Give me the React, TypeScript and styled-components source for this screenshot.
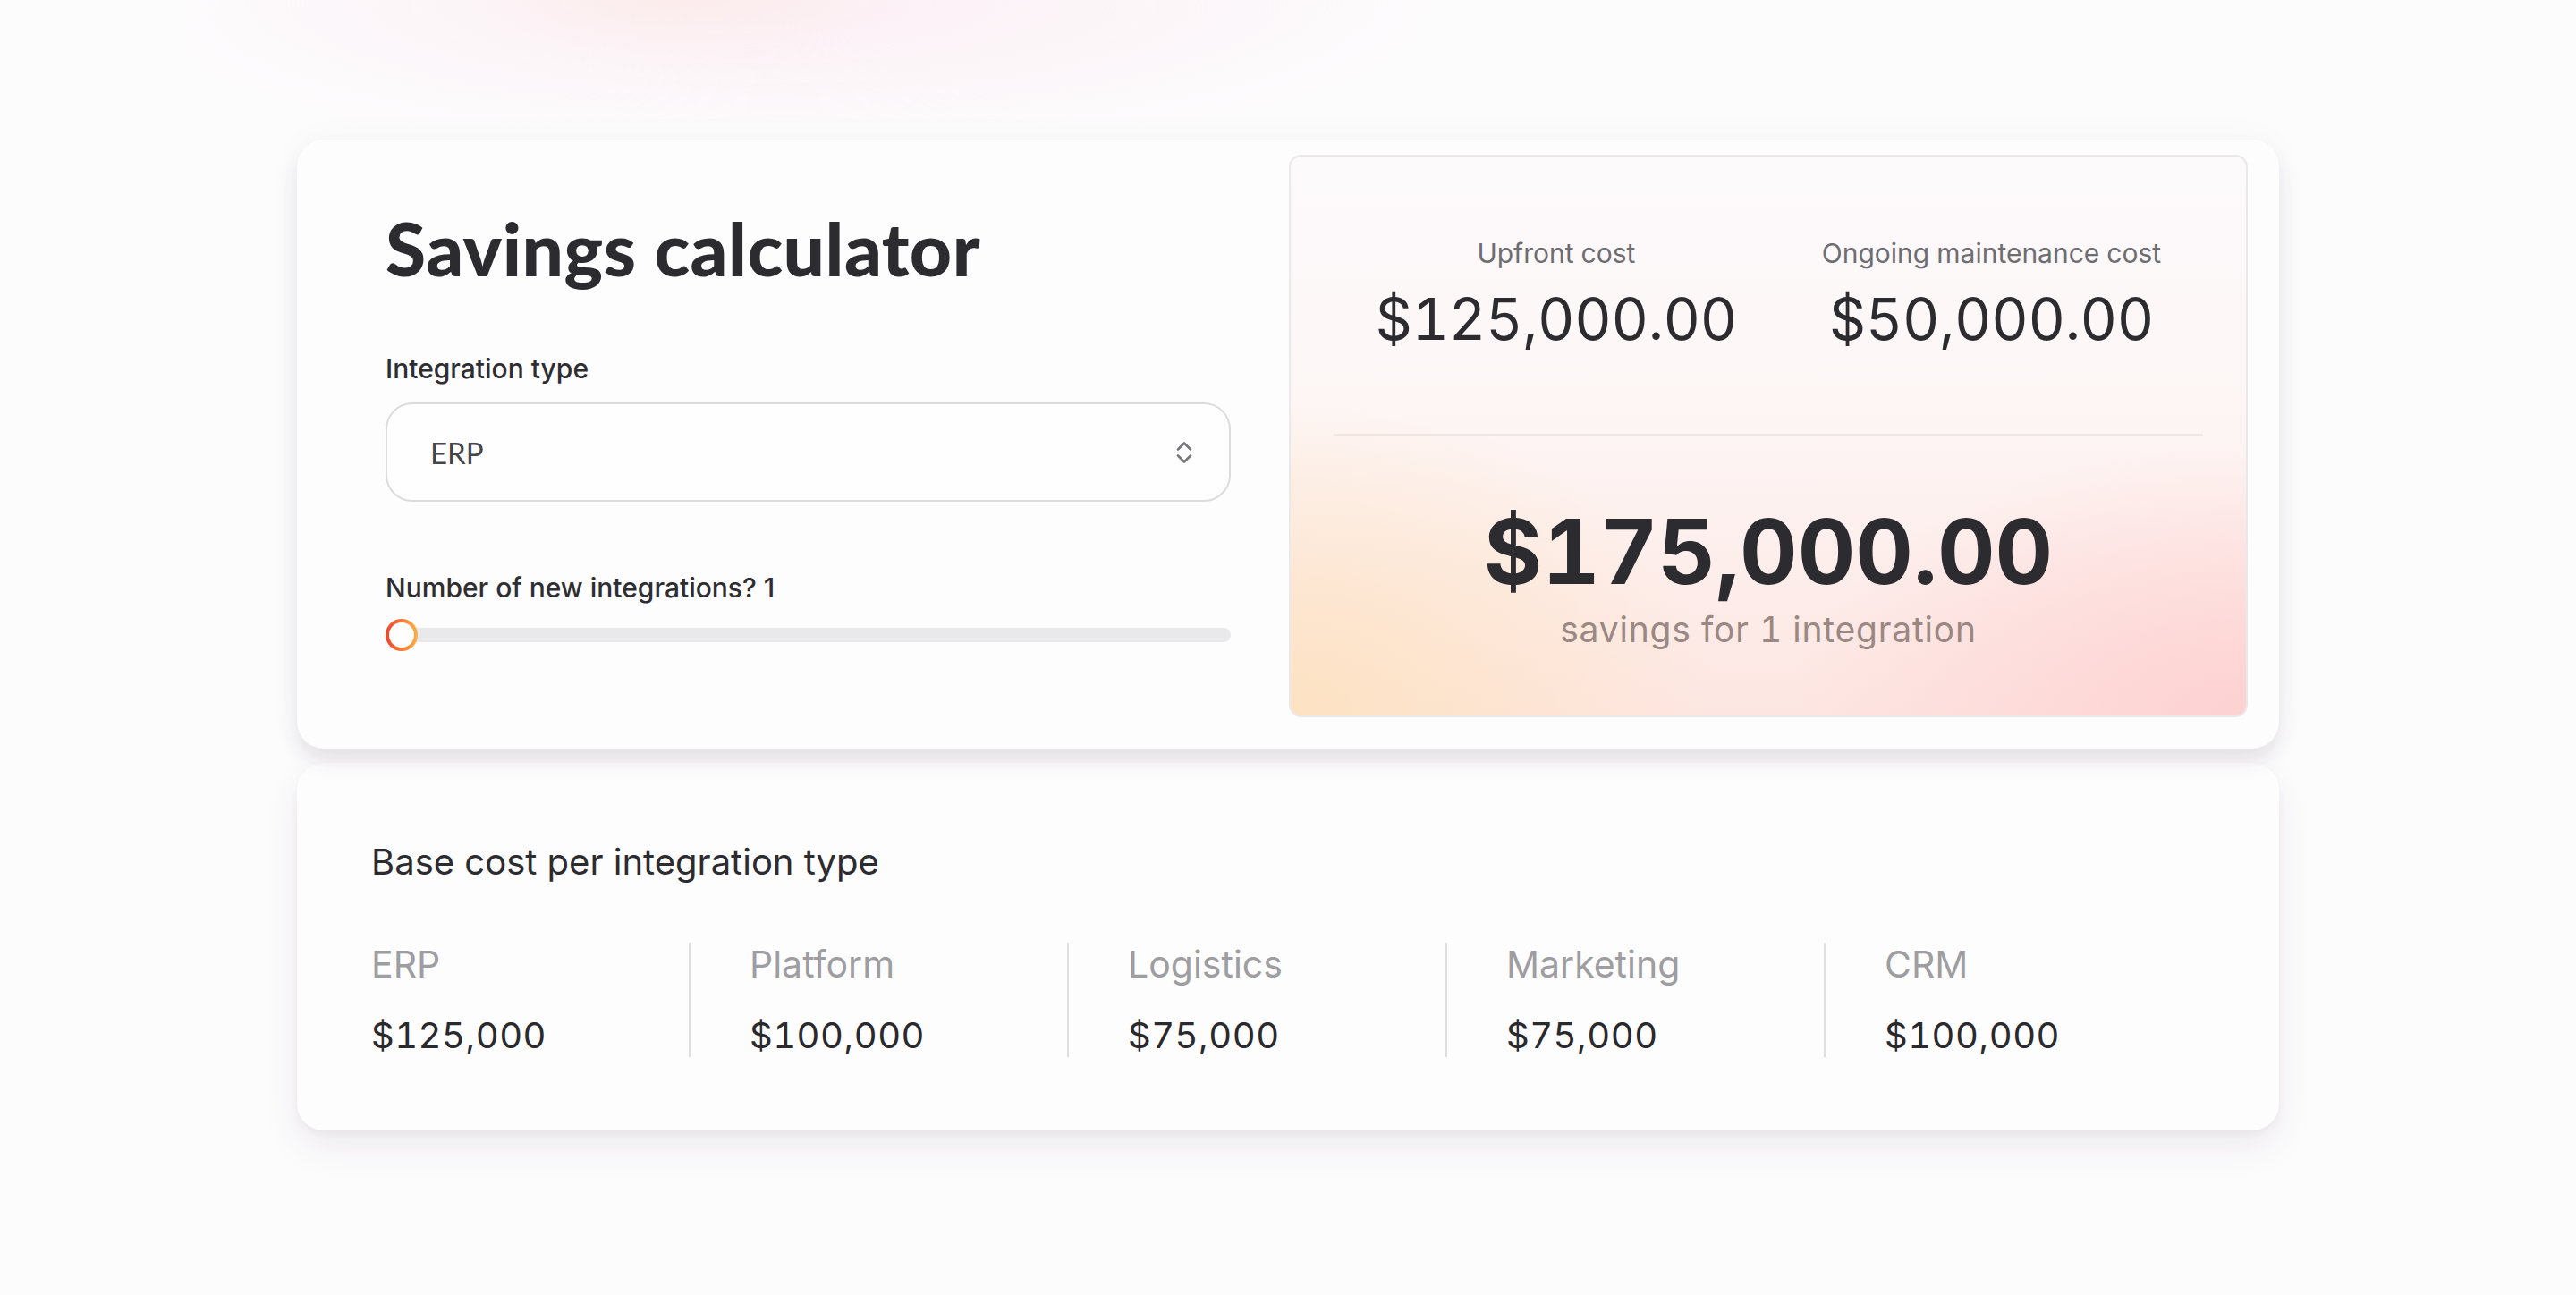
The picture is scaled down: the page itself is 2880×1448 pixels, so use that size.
import React from "react"
import styled, { createGlobalStyle } from "styled-components"

const GlobalStyle = createGlobalStyle`
  html, body {
    margin: 0;
    padding: 0;
    background: #fdfcfd;
  }
  body {
    font-family: Inter, "Noto Sans", sans-serif;
    color: #2c2b30;
  }
`

interface Cost {
  name: string
  amount: string
}

const baseCosts: Cost[] = [
  { name: "ERP", amount: "$125,000" },
  { name: "Platform", amount: "$100,000" },
  { name: "Logistics", amount: "$75,000" },
  { name: "Marketing", amount: "$75,000" },
  { name: "CRM", amount: "$100,000" },
]

function ChevronsIcon() {
  return (
    <svg width="20" height="30" viewBox="0 0 20 30" fill="none" stroke="#77767a" strokeWidth="2.6" strokeLinecap="round" strokeLinejoin="round">
      <path d="M3 11.5 10 4.5l7 7" />
      <path d="M3 18.5l7 7 7-7" />
    </svg>
  )
}

function App() {
  return (
    <Page>
      <GlobalStyle />
      <Glow />
      <CalculatorCard>
        <Controls>
          <Title>Savings calculator</Title>
          <FieldLabel $top={76} $gap={20}>Integration type</FieldLabel>
          <Select>
            <span>ERP</span>
            <ChevronsIcon />
          </Select>
          <FieldLabel $top={78} $gap={17}>Number of new integrations? 1</FieldLabel>
          <Slider>
            <Track />
            <Thumb />
          </Slider>
        </Controls>
        <ResultPanel>
          <CostRow>
            <CostColumn>
              <CostLabel>Upfront cost</CostLabel>
              <CostValue>$125,000.00</CostValue>
            </CostColumn>
            <CostColumn>
              <CostLabel>Ongoing maintenance cost</CostLabel>
              <CostValue>$50,000.00</CostValue>
            </CostColumn>
          </CostRow>
          <Divider />
          <Savings>$175,000.00</Savings>
          <SavingsNote>savings for 1 integration</SavingsNote>
        </ResultPanel>
      </CalculatorCard>
      <BaseCard>
        <BaseTitle>Base cost per integration type</BaseTitle>
        <BaseGrid>
          {baseCosts.map((cost) => (
            <BaseItem key={cost.name}>
              <BaseName>{cost.name}</BaseName>
              <BaseAmount>{cost.amount}</BaseAmount>
            </BaseItem>
          ))}
        </BaseGrid>
      </BaseCard>
    </Page>
  )
}

const Page = styled.div`
  position: relative;
  box-sizing: border-box;
  min-height: 1448px;
  overflow: hidden;
  display: flex;
  flex-direction: column;
  align-items: center;
  gap: 16px;
  padding-top: 156px;
`

const Glow = styled.div`
  position: absolute;
  top: 0;
  left: 200px;
  width: 1500px;
  height: 138px;
  overflow: hidden;
  &::before {
    content: "";
    position: absolute;
    inset: -40px 20px 0 20px;
    background:
      radial-gradient(ellipse 24% 60% at 36% 10%, rgba(252, 226, 218, 0.55), transparent 75%),
      radial-gradient(ellipse 60% 110% at 45% 20%, rgba(251, 229, 238, 0.6), transparent 85%);
    filter: blur(24px);
  }
`

const CalculatorCard = styled.section`
  position: relative;
  box-sizing: border-box;
  width: 2216px;
  height: 681px;
  display: flex;
  gap: 65px;
  padding: 17px 35px 35px 99px;
  background: #fefdfe;
  border-radius: 30px;
  box-shadow: 0 14px 22px rgba(40, 30, 60, 0.1), 0 0 40px rgba(40, 30, 60, 0.03);
  z-index: 2;
`

const Controls = styled.div`
  width: 945px;
  display: flex;
  flex-direction: column;
  padding-top: 63px;
`

const Title = styled.h1`
  margin: 0;
  font-family: Lato, "Noto Sans", sans-serif;
  font-weight: 900;
  font-size: 82px;
  line-height: 1;
  letter-spacing: 0.5px;
  color: #2c2b2f;
`

const FieldLabel = styled.label<{ $gap: number; $top: number }>`
  display: block;
  margin: ${({ $top }) => $top}px 0 ${({ $gap }) => $gap}px;
  font-weight: 500;
  font-size: 30px;
  line-height: 1.2;
  color: #2e2d31;
`

const Select = styled.div`
  box-sizing: border-box;
  height: 111px;
  display: flex;
  align-items: center;
  justify-content: space-between;
  padding: 0 40px 0 48px;
  border: 2px solid #dcdbdd;
  border-radius: 30px;
  background: #fefefe;
  font-family: Lato, "Noto Sans", sans-serif;
  font-size: 33px;
  color: #45444a;
`

const Slider = styled.div`
  position: relative;
  height: 36px;
  display: flex;
  align-items: center;
`

const Track = styled.div`
  flex: 1;
  height: 16px;
  margin-left: 15px;
  border-radius: 8px;
  background: #e9e8eb;
`

const Thumb = styled.div`
  position: absolute;
  left: 0;
  top: 0;
  box-sizing: border-box;
  width: 36px;
  height: 36px;
  border-radius: 50%;
  border: 4px solid transparent;
  background:
    linear-gradient(#ffffff, #ffffff) padding-box,
    linear-gradient(90deg, #f0432b, #fbb141) border-box;
`

const ResultPanel = styled.div`
  flex: 1;
  box-sizing: border-box;
  display: flex;
  flex-direction: column;
  align-items: center;
  padding-top: 90px;
  border: 2px solid #ebe8ec;
  border-radius: 14px;
  font-variant-numeric: tabular-nums;
  background:
    radial-gradient(ellipse 60% 75% at 0% 100%, rgba(253, 226, 192, 0.95), rgba(253, 226, 192, 0) 75%),
    radial-gradient(ellipse 60% 60% at 100% 100%, rgba(253, 208, 208, 0.95), rgba(253, 208, 208, 0) 80%),
    linear-gradient(180deg, #fdfafc 0%, #fdf6f5 45%, #fde6e2 100%);
`

const CostRow = styled.div`
  align-self: stretch;
  display: flex;
  justify-content: space-evenly;
`

const CostColumn = styled.div`
  display: flex;
  flex-direction: column;
  align-items: center;
  gap: 18px;
`

const CostLabel = styled.span`
  font-size: 30px;
  line-height: 1.2;
  color: #6e6d72;
`

const CostValue = styled.span`
  font-size: 64px;
  line-height: 1.2;
  letter-spacing: -0.3px;
  color: #2c2b30;
`

const Divider = styled.hr`
  align-self: stretch;
  margin: 89px 48px 0;
  border: none;
  height: 2px;
  background: #ede6e6;
`

const Savings = styled.div`
  margin-top: 75px;
  font-size: 100px;
  font-weight: 700;
  line-height: 1.1;
  color: #2c2b30;
`

const SavingsNote = styled.div`
  margin-top: 9px;
  font-size: 39px;
  line-height: 1.2;
  letter-spacing: 0.8px;
  color: #9b8883;
`

const BaseCard = styled.section`
  box-sizing: border-box;
  width: 2216px;
  height: 411px;
  padding: 87px 83px 0;
  background: #fefdfe;
  border-radius: 30px;
  box-shadow: 0 18px 40px rgba(40, 30, 60, 0.08), 0 4px 10px rgba(40, 30, 60, 0.04);
`

const BaseTitle = styled.h2`
  margin: 0;
  font-size: 40px;
  font-weight: 400;
  line-height: 1.2;
  color: #2c2b30;
`

const BaseGrid = styled.div`
  margin-top: 66px;
  display: grid;
  grid-template-columns: repeat(5, 357px);
  column-gap: 66px;
`

const BaseItem = styled.div`
  display: flex;
  flex-direction: column;
  gap: 31px;
  border-right: 2px solid #dededf;
  &:last-child {
    border-right: none;
  }
`

const BaseName = styled.span`
  font-size: 41px;
  line-height: 1.2;
  color: #9e9da1;
`

const BaseAmount = styled.span`
  font-size: 40px;
  line-height: 1.2;
  letter-spacing: 0.5px;
  font-variant-numeric: tabular-nums;
  color: #2a292d;
`

export default App
